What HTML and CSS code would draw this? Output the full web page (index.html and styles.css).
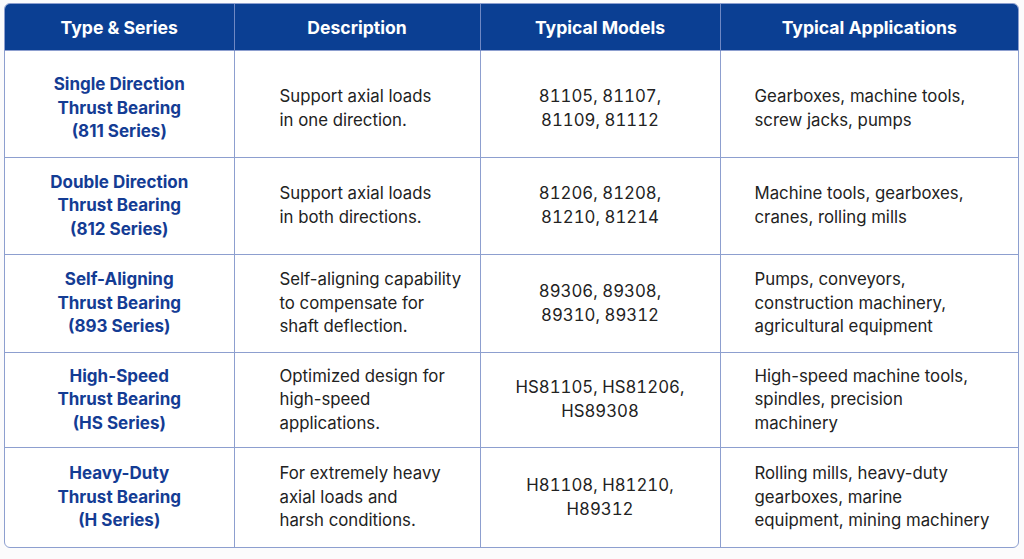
FILE: index.html
```html
<!DOCTYPE html>
<html>
<head>
<meta charset="utf-8">
<link rel="stylesheet" href="styles.css">
</head>
<body>
<div class="wrap">
<table class="spec">
  <colgroup>
    <col class="c1"><col class="c2"><col class="c3"><col class="c4">
  </colgroup>
  <thead>
    <tr class="head">
      <th>Type &amp; Series</th>
      <th>Description</th>
      <th>Typical Models</th>
      <th>Typical Applications</th>
    </tr>
  </thead>
  <tbody>
    <tr class="r1">
      <td class="type">Single Direction<br>Thrust Bearing<br>(811 Series)</td>
      <td class="desc">Support axial loads<br>in one direction.</td>
      <td class="models">81105, 81107,<br>81109, 81112</td>
      <td class="apps">Gearboxes, machine tools,<br>screw jacks, pumps</td>
    </tr>
    <tr class="r2">
      <td class="type">Double Direction<br>Thrust Bearing<br>(812 Series)</td>
      <td class="desc">Support axial loads<br>in both directions.</td>
      <td class="models">81206, 81208,<br>81210, 81214</td>
      <td class="apps">Machine tools, gearboxes,<br>cranes, rolling mills</td>
    </tr>
    <tr class="r3">
      <td class="type">Self-Aligning<br>Thrust Bearing<br>(893 Series)</td>
      <td class="desc">Self-aligning capability<br>to compensate for<br>shaft deflection.</td>
      <td class="models">89306, 89308,<br>89310, 89312</td>
      <td class="apps">Pumps, conveyors,<br>construction machinery,<br>agricultural equipment</td>
    </tr>
    <tr class="r4">
      <td class="type">High-Speed<br>Thrust Bearing<br>(HS Series)</td>
      <td class="desc">Optimized design for<br>high-speed<br>applications.</td>
      <td class="models">HS81105, HS81206,<br>HS89308</td>
      <td class="apps">High-speed machine tools,<br>spindles, precision<br>machinery</td>
    </tr>
    <tr class="r5">
      <td class="type">Heavy-Duty<br>Thrust Bearing<br>(H Series)</td>
      <td class="desc">For extremely heavy<br>axial loads and<br>harsh conditions.</td>
      <td class="models">H81108, H81210,<br>H89312</td>
      <td class="apps">Rolling mills, heavy-duty<br>gearboxes, marine<br>equipment, mining machinery</td>
    </tr>
  </tbody>
</table>
</div>
</body>
</html>
```

FILE: styles.css
```css
html, body {
  margin: 0;
  padding: 0;
  background: #fbfbfc;
}
body {
  padding: 3px 0 0 4px;
  font-family: Inter, "Noto Sans", Roboto, sans-serif;
}
.wrap {
  width: 1013px;
  border: 1px solid #8d9fcf;
  border-radius: 6px;
  overflow: hidden;
  background: #ffffff;
}
.spec {
  width: 100%;
  border-collapse: collapse;
  table-layout: fixed;
}
.c1 { width: 229px; }
.c2 { width: 246px; }
.c3 { width: 240px; }
.c4 { width: 298px; }
.spec th, .spec td {
  border-left: 1px solid #8d9fcf;
  border-top: 1px solid #8d9fcf;
  padding: 0;
  vertical-align: middle;
}
.spec tr > :first-child { border-left: none; }
.spec thead th { border-top: none; }
.head th {
  background: #0b3f93;
  color: #ffffff;
  font-size: 17.6px;
  font-weight: 700;
  height: 46px;
  text-align: center;
  border-left-color: #6f88c4;
}
.spec td {
  font-size: 16.8px;
  line-height: 23.6px;
  color: #222222;
}
.r1 td { height: 97px; padding-top: 9px; }
.r2 td { height: 96px; }
.r3 td { height: 97px; }
.r4 td { height: 94px; }
.r5 td { height: 99px; }
.spec td.type {
  text-align: center;
  color: #143c94;
  font-weight: 700;
  font-size: 17px;
}
.spec td.desc {
  text-align: left;
  padding-left: 45px;
}
.spec td.models {
  text-align: center;
  font-variant-numeric: tabular-nums;
}
.spec td.apps {
  text-align: left;
  padding-left: 34px;
}
```
